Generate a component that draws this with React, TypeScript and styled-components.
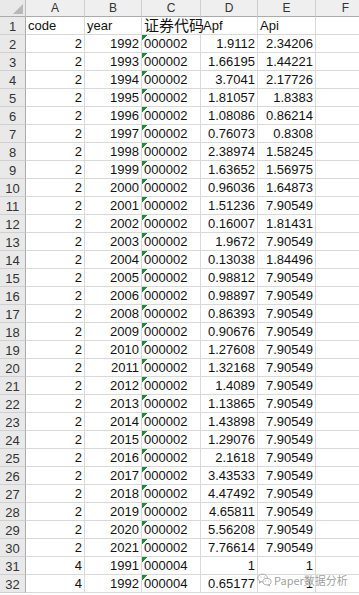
import React from 'react';
import styled, { createGlobalStyle } from 'styled-components';

const GlobalStyle = createGlobalStyle`
	html, body {
		margin: 0;
		padding: 0;
		background: #ffffff;
		overflow: hidden;
	}
	body {
		font-family: 'Liberation Sans', Arial, sans-serif;
	}
`;

interface Row {
	code: string;
	year: string;
	stock: string;
	apf: string;
	api: string;
}

const years: [string, string, string][] = [
	['1992', '1.9112', '2.34206'],
	['1993', '1.66195', '1.44221'],
	['1994', '3.7041', '2.17726'],
	['1995', '1.81057', '1.8383'],
	['1996', '1.08086', '0.86214'],
	['1997', '0.76073', '0.8308'],
	['1998', '2.38974', '1.58245'],
	['1999', '1.63652', '1.56975'],
	['2000', '0.96036', '1.64873'],
	['2001', '1.51236', '7.90549'],
	['2002', '0.16007', '1.81431'],
	['2003', '1.9672', '7.90549'],
	['2004', '0.13038', '1.84496'],
	['2005', '0.98812', '7.90549'],
	['2006', '0.98897', '7.90549'],
	['2008', '0.86393', '7.90549'],
	['2009', '0.90676', '7.90549'],
	['2010', '1.27608', '7.90549'],
	['2011', '1.32168', '7.90549'],
	['2012', '1.4089', '7.90549'],
	['2013', '1.13865', '7.90549'],
	['2014', '1.43898', '7.90549'],
	['2015', '1.29076', '7.90549'],
	['2016', '2.1618', '7.90549'],
	['2017', '3.43533', '7.90549'],
	['2018', '4.47492', '7.90549'],
	['2019', '4.65811', '7.90549'],
	['2020', '5.56208', '7.90549'],
	['2021', '7.76614', '7.90549']
];

const rows: Row[] = [
	...years.map(([year, apf, api]) => ({ code: '2', year, stock: '000002', apf, api })),
	{ code: '4', year: '1991', stock: '000004', apf: '1', api: '1' },
	{ code: '4', year: '1992', stock: '000004', apf: '0.65177', api: '1' }
];

const columns = ['A', 'B', 'C', 'D', 'E', 'F'];

const Sheet = styled.div`
	position: relative;
	display: grid;
	grid-template-columns: 26px 59px 57px 59px 57px 58px 60px;
	grid-template-rows: 17px;
	grid-auto-rows: 18px;
	width: 376px;
	height: 595px;
	overflow: hidden;
`;

const Corner = styled.div`
	background: #e9e9e9;
	border-right: 1px solid #bdbdbd;
	border-bottom: 1px solid #ababab;
	box-sizing: border-box;
	position: relative;
	overflow: hidden;

	&::after {
		content: '';
		position: absolute;
		right: 2px;
		bottom: 2px;
		border-style: solid;
		border-width: 0 0 10px 10px;
		border-color: transparent transparent #b8b8b8 transparent;
	}
`;

const ColHeader = styled.div`
	background: #efefef;
	border-right: 1px solid #cfcfcf;
	border-bottom: 1px solid #ababab;
	box-sizing: border-box;
	display: flex;
	align-items: center;
	justify-content: center;
	font-size: 12px;
	color: #333;
`;

const RowHeader = styled.div`
	background: #e9e9e9;
	border-right: 1px solid #ababab;
	border-bottom: 1px solid #d0d0d0;
	box-sizing: border-box;
	display: flex;
	align-items: center;
	justify-content: center;
	font-size: 13px;
	color: #333;
	padding-top: 1px;
`;

const Cell = styled.div<{ $align?: 'left' | 'right'; $flag?: boolean; $wide?: boolean }>`
	border-right: 1px solid #d9d9d9;
	border-bottom: 1px solid #d9d9d9;
	box-sizing: border-box;
	display: flex;
	align-items: flex-end;
	justify-content: ${(p) => (p.$align === 'right' ? 'flex-end' : 'flex-start')};
	padding: 0 2px 1px 2px;
	font-size: ${(p) => (p.$wide ? '15px' : '13px')};
	font-family: ${(p) => (p.$wide ? "'Noto Sans CJK SC', sans-serif" : "'Liberation Sans', Arial, sans-serif")};
	line-height: ${(p) => (p.$wide ? '17px' : '15px')};
	color: #111;
	white-space: nowrap;
	overflow: visible;
	background: ${(p) =>
		p.$flag ? 'linear-gradient(135deg, #1e8a3c 0, #1e8a3c 4px, transparent 4px) no-repeat' : 'transparent'};
`;

const Watermark = styled.div`
	position: absolute;
	left: 257px;
	top: 572px;
	display: flex;
	align-items: center;
	gap: 2px;
	color: rgba(140, 140, 140, 0.85);
	font-size: 11px;
	font-family: 'Noto Sans CJK SC', 'Liberation Sans', sans-serif;
	line-height: 16px;
	text-shadow: 0 0 2px #fff, 0 0 1px #fff;
	pointer-events: none;
`;

const WeChatIcon = () => (
	<svg width="15" height="14" viewBox="0 0 15 14" fill="none" stroke="#a6a6a6" strokeWidth="0.9">
		<ellipse cx="5.6" cy="5" rx="4.8" ry="3.9" />
		<path d="M2.8 8.2 L2.3 10.2 L4.5 8.8" />
		<ellipse cx="10" cy="8.6" rx="4.1" ry="3.3" fill="rgba(255,255,255,0.8)" />
		<path d="M12.2 11.4 L12.8 13 L10.8 11.8" />
		<circle cx="4" cy="4" r="0.6" fill="#a6a6a6" stroke="none" />
		<circle cx="7.2" cy="4" r="0.6" fill="#a6a6a6" stroke="none" />
		<circle cx="8.6" cy="8" r="0.5" fill="#a6a6a6" stroke="none" />
		<circle cx="11.4" cy="8" r="0.5" fill="#a6a6a6" stroke="none" />
	</svg>
);

export default function App() {
	return (
		<>
			<GlobalStyle />
			<Sheet>
				<Corner />
				{columns.map((c) => (
					<ColHeader key={c}>{c}</ColHeader>
				))}

				<RowHeader>1</RowHeader>
				<Cell>code</Cell>
				<Cell>year</Cell>
				<Cell $wide>证券代码</Cell>
				<Cell>Apf</Cell>
				<Cell>Api</Cell>
				<Cell />

				{rows.map((r, i) => (
					<React.Fragment key={i}>
						<RowHeader>{i + 2}</RowHeader>
						<Cell $align="right">{r.code}</Cell>
						<Cell $align="right">{r.year}</Cell>
						<Cell $flag>{r.stock}</Cell>
						<Cell $align="right">{r.apf}</Cell>
						<Cell $align="right">{r.api}</Cell>
						<Cell />
					</React.Fragment>
				))}

				<Watermark>
					<WeChatIcon />
					<span>Paper数据分析</span>
				</Watermark>
			</Sheet>
		</>
	);
}
